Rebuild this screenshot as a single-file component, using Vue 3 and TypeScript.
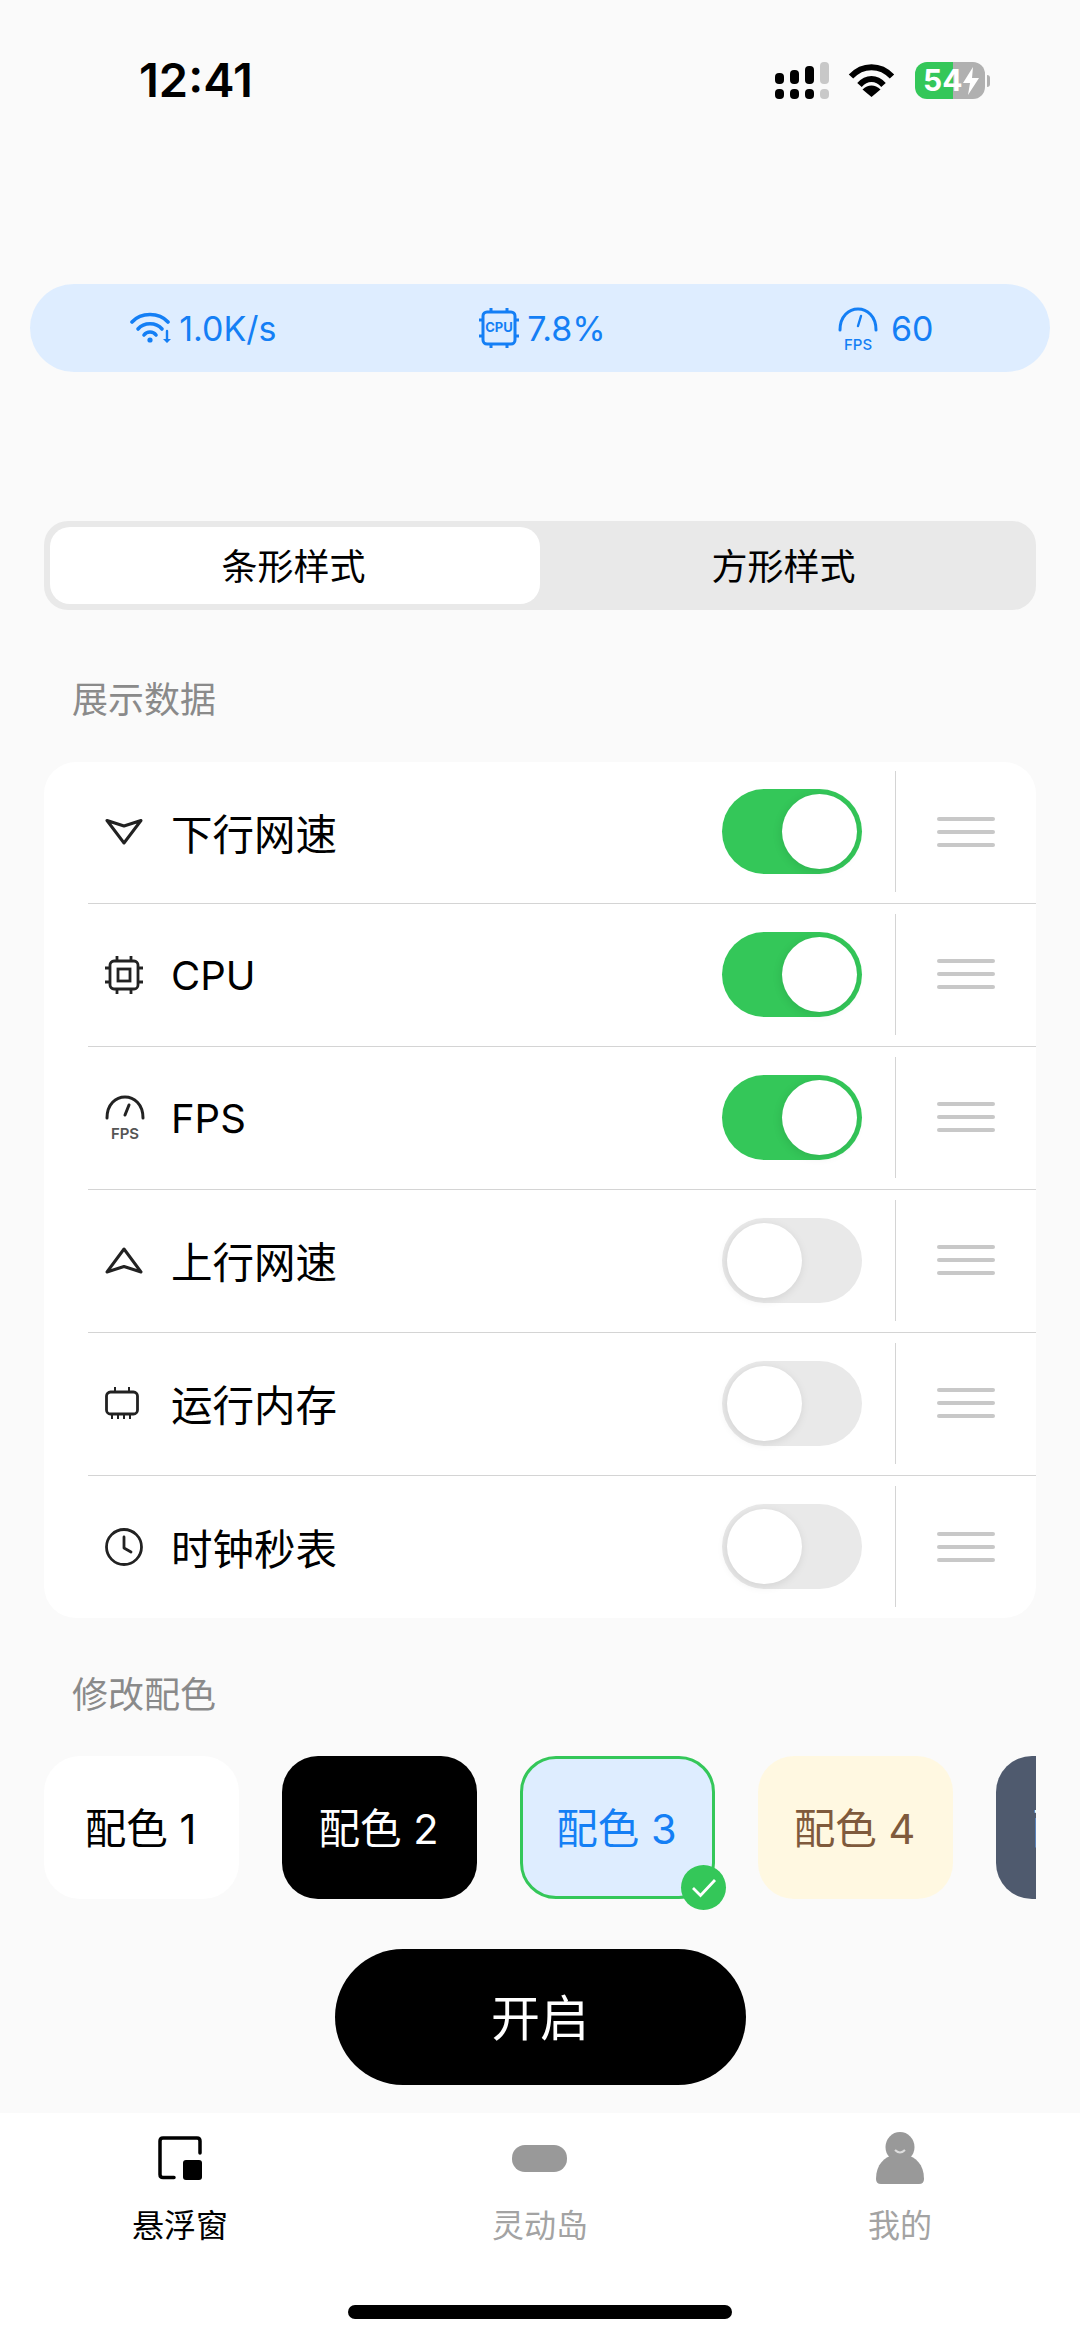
<template>
  <div class="page">
    <!-- status bar -->
    <div class="status">
      <span class="time">12:41</span>
      <div class="status-right">
        <div class="signal">
          <div class="signal-top">
            <i style="height: 11px"></i><i style="height: 14px"></i><i style="height: 18px"></i><i class="dim" style="height: 22px"></i>
          </div>
          <div class="signal-bottom">
            <i></i><i></i><i></i><i class="dim"></i>
          </div>
        </div>
        <svg class="wifi" width="47" height="34" viewBox="0 0 47 34">
          <path d="M3 13.5C14.5 1 32.5 1 44 13.5" fill="none" stroke="#000" stroke-width="6" />
          <path d="M11.5 22C18.5 14 28.5 14 35.5 22" fill="none" stroke="#000" stroke-width="6" />
          <path d="M23.5 34L14.5 26.5C20 21 27 21 32.5 26.5Z" fill="#000" />
        </svg>
        <div class="battery">
          <div class="battery-body">
            <span>54</span>
            <svg width="18" height="28" viewBox="0 0 18 28"><path d="M11 0L1 16H8L6 28L17 11H10Z" fill="#fff" /></svg>
          </div>
          <i class="battery-nub"></i>
        </div>
      </div>
    </div>

    <!-- preview bar -->
    <div class="pill">
      <div class="pill-item">
        <svg width="42" height="32" viewBox="0 0 42 32" fill="none" stroke="#147ff5" stroke-width="3.6" stroke-linecap="round">
          <path d="M2 10C11 0 29 0 38 10" />
          <path d="M8 17C14 10 26 10 32 17" />
          <path d="M14 23C17 19 23 19 26 23" />
          <circle cx="20" cy="28" r="2.6" fill="#147ff5" stroke="none" />
          <path d="M37 19V29" stroke-width="2.4" />
          <path d="M33 27L37 31L41 27Z" fill="#147ff5" stroke="none" />
        </svg>
        <span>1.0K/s</span>
      </div>
      <div class="pill-item">
        <svg width="42" height="42" viewBox="0 0 42 42" fill="none" stroke="#147ff5" stroke-width="3">
          <rect x="5" y="5" width="32" height="32" rx="4" />
          <path d="M13 1V5M29 1V5M13 37V41M29 37V41M1 13H5M1 29H5M37 13H41M37 29H41" />
          <text x="21" y="25" class="cpu-label" fill="#147ff5" stroke="none" text-anchor="middle">CPU</text>
        </svg>
        <span>7.8%</span>
      </div>
      <div class="pill-item fps-item">
        <svg class="fps-svg" width="40" height="50" viewBox="0 0 40 50" fill="none" stroke="#147ff5" stroke-width="3" stroke-linecap="round">
          <path d="M2 25C2 -3 38 -3 38 25" />
          <path d="M23 11L20 21" stroke-width="2.4" />
          <text x="20" y="45" class="fps-label" fill="#147ff5" stroke="none" text-anchor="middle">FPS</text>
        </svg>
        <span>60</span>
      </div>
    </div>

    <!-- style switch -->
    <div class="segment">
      <div class="segment-item active">条形样式</div>
      <div class="segment-item">方形样式</div>
    </div>

    <div class="section-label data-label">展示数据</div>

    <div class="card">
      <div v-for="row in rows" :key="row.name" class="row">
        <div class="row-icon">
          <svg v-if="row.icon === 'down'" width="38" height="27" viewBox="0 0 38 27" fill="none" stroke="#222" stroke-width="3" stroke-linejoin="round">
            <path d="M2 2.5L19 8L36 2.5L19 25Z" />
          </svg>
          <svg v-else-if="row.icon === 'cpu'" class="cpu-row-svg" width="38" height="38" viewBox="0 0 38 38" fill="none" stroke="#222" stroke-width="2.8">
            <rect x="5" y="5" width="28" height="28" rx="4" />
            <rect x="13" y="13" width="12" height="12" />
            <path d="M12 0V5M26 0V5M12 33V38M26 33V38M0 12H5M0 26H5M33 12H38M33 26H38" />
          </svg>
          <svg v-else-if="row.icon === 'fps'" class="fps-svg" width="40" height="50" viewBox="0 0 40 50" fill="none" stroke="#222" stroke-width="3" stroke-linecap="round">
            <path d="M2 24C2 -4 38 -4 38 24" />
            <path d="M24 11L20 21" />
            <text x="20" y="45" class="fps-row-label" fill="#555" stroke="none" text-anchor="middle">FPS</text>
          </svg>
          <svg v-else-if="row.icon === 'up'" width="38" height="27" viewBox="0 0 38 27" fill="none" stroke="#222" stroke-width="3" stroke-linejoin="round">
            <path d="M19 2L36 25L19 19.5L2 25Z" />
          </svg>
          <svg v-else-if="row.icon === 'ram'" width="34" height="32" viewBox="0 0 34 32" fill="none" stroke="#222" stroke-width="2.8">
            <rect x="1.5" y="5" width="31" height="22" rx="4" />
            <path d="M10 0V5M24 0V5M7 27V32M13 27V32M19 27V32M25 27V32" stroke-width="2" />
          </svg>
          <svg v-else width="38" height="38" viewBox="0 0 38 38" fill="none" stroke="#222" stroke-width="2.8" stroke-linecap="round" stroke-linejoin="round">
            <circle cx="19" cy="19" r="17.5" />
            <path d="M19 9V20L26 24" />
          </svg>
        </div>
        <span class="row-name" :class="{ latin: row.latin }">{{ row.name }}</span>
        <div class="toggle" :class="{ on: row.on }"><i></i></div>
        <i class="divider"></i>
        <div class="handle"><i></i><i></i><i></i></div>
      </div>
    </div>

    <div class="section-label color-label">修改配色</div>

    <div class="chips">
      <div v-for="chip in chips" :key="chip.name" class="chip" :class="chip.cls">
        <span class="chip-name">{{ chip.name }}</span>
        <div v-if="chip.selected" class="chip-check">
          <svg width="26" height="20" viewBox="0 0 26 20" fill="none" stroke="#fff" stroke-width="2.8">
            <path d="M2 10L9.500 17.500L24 2" />
          </svg>
        </div>
      </div>
    </div>

    <div class="start-btn"><span>开启</span></div>

    <!-- tabs -->
    <div class="tabbar">
      <div class="tabs">
        <div class="tab active">
          <div class="tab-icon">
            <svg width="44" height="44" viewBox="0 0 44 44">
              <path d="M16 41.500H5Q2 41.500 2 38.500V5Q2 2 5 2H39Q42 2 42 5V17" fill="none" stroke="#000" stroke-width="3.500" stroke-linecap="round" />
              <rect x="25" y="24" width="19" height="20" rx="3" fill="#000" />
            </svg>
          </div>
          <span>悬浮窗</span>
        </div>
        <div class="tab">
          <div class="tab-icon"><i class="island"></i></div>
          <span>灵动岛</span>
        </div>
        <div class="tab">
          <div class="tab-icon">
            <svg width="50" height="52" viewBox="0 0 50 52">
              <ellipse cx="25" cy="15" rx="14.500" ry="15" fill="#999" />
              <path d="M1 47C1 32 10 25 18 23H32C40 25 49 32 49 47Q49 52 44 52H6Q1 52 1 47Z" fill="#999" />
              <path d="M20 18Q25 23 30 18" fill="none" stroke="#ddd" stroke-width="2" />
            </svg>
          </div>
          <span>我的</span>
        </div>
      </div>
      <i class="home-bar"></i>
    </div>
  </div>
</template>

<script setup lang="ts">
interface Row {
  name: string
  icon: string
  on: boolean
  latin?: boolean
}

const rows: Row[] = [
  { name: '下行网速', icon: 'down', on: true },
  { name: 'CPU', icon: 'cpu', on: true, latin: true },
  { name: 'FPS', icon: 'fps', on: true, latin: true },
  { name: '上行网速', icon: 'up', on: false },
  { name: '运行内存', icon: 'ram', on: false },
  { name: '时钟秒表', icon: 'clock', on: false },
]

const chips = [
  { name: '配色 1', cls: 'chip-white', selected: false },
  { name: '配色 2', cls: 'chip-black', selected: false },
  { name: '配色 3', cls: 'chip-blue', selected: true },
  { name: '配色 4', cls: 'chip-cream', selected: false },
  { name: '配色 5', cls: 'chip-slate', selected: false },
]
</script>

<style>
html, body {
  background: #fafafa;
}
</style>

<style scoped>
.page {
  width: 1080px;
  height: 2341px;
  display: flex;
  flex-direction: column;
  overflow: hidden;
  background: #fafafa;
  color: #000;
  font-family: Inter, "Noto Sans CJK SC", sans-serif;
}

i {
  display: block;
}

.status {
  height: 284px;
  flex-shrink: 0;
  display: flex;
  justify-content: space-between;
  align-items: flex-start;
  padding: 52px 90px 0 139px;
  box-sizing: border-box;
}

.time {
  font-size: 47px;
  line-height: 56px;
  font-weight: 600;
}

.status-right {
  display: flex;
  align-items: flex-start;
  padding-top: 10px;
}

.signal {
  width: 54px;
  height: 37px;
  display: flex;
  flex-direction: column;
  gap: 5px;
}

.signal-top,
.signal-bottom {
  display: flex;
  gap: 6px;
  align-items: flex-end;
}

.signal-top {
  height: 22px;
}

.signal-top i,
.signal-bottom i {
  width: 9px;
  border-radius: 4px;
  background: #000;
}

.signal-bottom i {
  height: 10px;
}

.signal i.dim {
  background: #c8c8c8;
}

.wifi {
  margin-left: 19px;
  margin-top: 1px;
}

.battery {
  margin-left: 20px;
  display: flex;
  align-items: center;
  gap: 2px;
}

.battery-body {
  width: 70px;
  height: 37px;
  border-radius: 12px;
  display: flex;
  align-items: center;
  padding-left: 8px;
  box-sizing: border-box;
  background: linear-gradient(to right, #34c759 54%, #b0b0b0 54%);
  color: #fff;
  font-size: 30px;
  line-height: 37px;
  font-weight: 700;
}

.battery-nub {
  width: 3px;
  height: 12px;
  background: #b0b0b0;
  border-radius: 0 3px 3px 0;
}

.pill {
  height: 88px;
  margin: 0 30px;
  flex-shrink: 0;
  border-radius: 44px;
  background: #deedff;
  display: grid;
  grid-template-columns: repeat(3, 1fr);
  padding: 0 0 0 4px;
  color: #147ff5;
  font-size: 34px;
}

.pill-item {
  display: flex;
  align-items: center;
  justify-content: center;
  gap: 7px;
}

.fps-item {
  gap: 13px;
  padding-left: 10px;
}

.fps-svg {
  margin-top: 4px;
}

.cpu-label {
  font-size: 13px;
  font-weight: 700;
}

.fps-label {
  font-size: 15px;
  font-weight: 500;
}

.fps-row-label {
  font-size: 15px;
  font-weight: 600;
}

.segment {
  margin: 149px 44px 0;
  height: 89px;
  flex-shrink: 0;
  box-sizing: border-box;
  padding: 6px;
  border-radius: 24px;
  background: #e9e9e9;
  display: flex;
  font-size: 36px;
}

.segment-item {
  flex: 1;
  display: flex;
  align-items: center;
  justify-content: center;
  border-radius: 20px;
  padding: 0 3px 3px 0;
}

.segment-item.active {
  background: #fff;
}

.section-label {
  margin-left: 72px;
  font-size: 36px;
  line-height: 50px;
  color: #8a8a8a;
}

.data-label {
  margin-top: 65px;
  margin-bottom: 37px;
}

.color-label {
  margin-top: 52px;
  margin-bottom: 36px;
}

.card {
  margin: 0 44px;
  height: 856px;
  flex-shrink: 0;
  background: #fff;
  border-radius: 32px;
  overflow: hidden;
}

.row {
  margin-left: 44px;
  height: 143px;
  box-sizing: border-box;
  padding: 0 0 2px 17px;
  border-bottom: 1px solid #d4d4d4;
  display: flex;
  align-items: center;
}

.row:first-child {
  height: 142px;
}

.row:last-child {
  border-bottom: none;
}

.row-icon {
  width: 40px;
  display: flex;
  justify-content: flex-start;
}

.cpu-row-svg {
  margin-top: 2px;
}

.row-name {
  margin-left: 26px;
  font-size: 41.5px;
  flex: 1;
}

.row-name.latin {
  font-size: 40px;
  padding-top: 3px;
}

.toggle {
  width: 140px;
  height: 85px;
  box-sizing: border-box;
  padding: 5px;
  border-radius: 43px;
  background: #e9e9e9;
  display: flex;
}

.toggle i {
  width: 75px;
  height: 75px;
  border-radius: 50%;
  background: #fff;
  box-shadow: -1px 2px 10px rgba(0, 0, 0, 0.1);
}

.toggle.on {
  background: #34c759;
  justify-content: flex-end;
}

.divider {
  width: 1px;
  height: 121px;
  margin-left: 33px;
  background: #d4d4d4;
}

.handle {
  width: 58px;
  margin: 0 41px;
  display: flex;
  flex-direction: column;
  gap: 9px;
}

.handle i {
  height: 4px;
  border-radius: 2px;
  background: #c8c8c8;
}

.chips {
  margin: 0 44px;
  padding-bottom: 12px;
  flex-shrink: 0;
  display: flex;
  gap: 43px;
  overflow: hidden;
}

.chip {
  position: relative;
  width: 195px;
  height: 143px;
  flex-shrink: 0;
  box-sizing: border-box;
  border-radius: 36px;
  display: flex;
  align-items: center;
  justify-content: center;
  font-size: 41.5px;
  white-space: nowrap;
}

.chip-name {
  margin: 0 2px 3px 0;
}

.chip-white {
  background: #fff;
  color: #000;
}

.chip-black {
  background: #000;
  color: #fff;
}

.chip-blue {
  background: #deedff;
  color: #147ff5;
  border: 3px solid #34c759;
}

.chip-cream {
  background: #fff8e1;
  color: #7f5a3c;
}

.chip-slate {
  background: #4f5a6e;
  color: #fff;
}

.chip-check {
  position: absolute;
  right: -14px;
  bottom: -14px;
  width: 45px;
  height: 45px;
  border-radius: 50%;
  background: #34c759;
  display: flex;
  align-items: center;
  justify-content: center;
}

.start-btn {
  align-self: center;
  margin-top: 38px;
  width: 411px;
  height: 136px;
  flex-shrink: 0;
  border-radius: 68px;
  background: #000;
  color: #fff;
  font-size: 49px;
  display: flex;
  align-items: center;
  justify-content: center;
  padding-bottom: 6px;
  box-sizing: border-box;
}

.tabbar {
  margin-top: auto;
  height: 228px;
  flex-shrink: 0;
  background: #fff;
  display: flex;
  flex-direction: column;
  align-items: center;
}

.tabs {
  align-self: stretch;
  display: grid;
  grid-template-columns: repeat(3, 1fr);
  padding-top: 15px;
}

.tab {
  display: flex;
  flex-direction: column;
  align-items: center;
  color: #a3a3a3;
  font-size: 32px;
  line-height: 44px;
}

.tab.active {
  color: #000;
}

.tab-icon {
  height: 60px;
  margin-bottom: 16px;
  display: flex;
  align-items: center;
  justify-content: center;
}

.island {
  width: 55px;
  height: 27px;
  margin-right: 2px;
  border-radius: 13px;
  background: #999;
}

.home-bar {
  margin-top: 57px;
  width: 384px;
  height: 14px;
  border-radius: 7px;
  background: #000;
}
</style>
